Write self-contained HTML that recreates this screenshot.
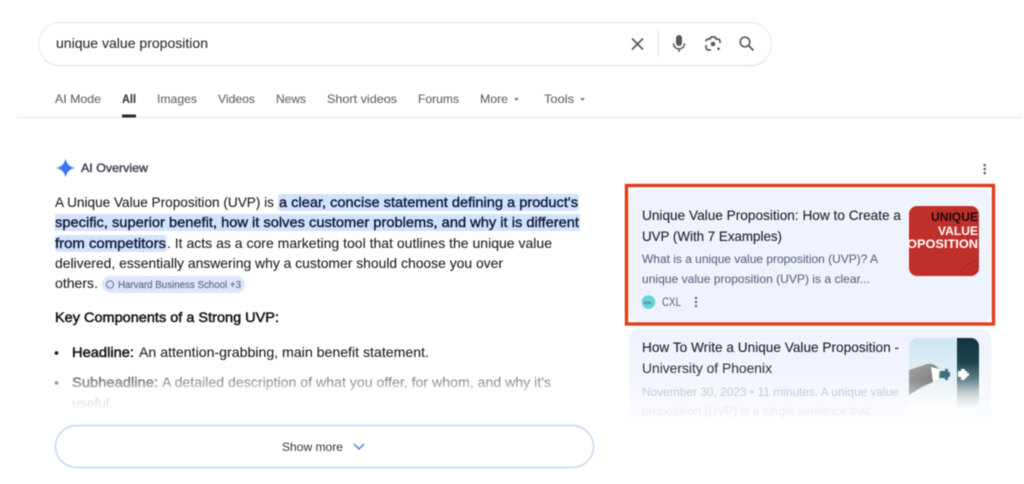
<!DOCTYPE html>
<html lang="en"><head><meta charset="utf-8"><title>unique value proposition</title>
<style>
html,body{margin:0;padding:0;background:#fff;width:1024px;height:484px;overflow:hidden}
svg{display:block;filter:blur(.5px)}
text{font-family:"Liberation Sans",sans-serif;white-space:pre}
.t{font-size:12px;fill:#62666b;stroke:#62666b;stroke-width:.12px}
.p{font-size:14px;fill:#1f2024;stroke:#1f2024;stroke-width:.1px}
.b{font-size:14px;fill:#0f1c38;stroke:#0f1c38;stroke-width:.38px}
.h{font-size:14px;fill:#1f2024;stroke:#1f2024;stroke-width:.1px}
.m{font-size:14px;fill:#131416;stroke:#131416;stroke-width:.5px}
.s{font-size:12px;fill:#5f6480;stroke:#5f6480;stroke-width:.08px}
</style></head><body>
<svg width="1024" height="484" viewBox="0 0 1024 484" xmlns="http://www.w3.org/2000/svg">
<defs>
<linearGradient id="fade" x1="0" y1="0" x2="0" y2="1"><stop offset="0" stop-color="#fff" stop-opacity="0"/><stop offset=".5" stop-color="#fff" stop-opacity=".65"/><stop offset="1" stop-color="#fff"/></linearGradient>
<linearGradient id="fade3" x1="0" y1="0" x2="0" y2="1"><stop offset="0" stop-color="#fff" stop-opacity="0"/><stop offset="1" stop-color="#fff" stop-opacity=".9"/></linearGradient>
<linearGradient id="card2" x1="0" y1="0" x2="0" y2="1"><stop offset="0" stop-color="#eff3fd"/><stop offset=".5" stop-color="#f3f6fd"/><stop offset="1" stop-color="#fff"/></linearGradient>
<linearGradient id="sky" x1="0" y1="0" x2="0" y2="1"><stop offset="0" stop-color="#cfe6f0"/><stop offset="1" stop-color="#f4f8fc"/></linearGradient>
<linearGradient id="dark" x1="0" y1="0" x2="0" y2="1"><stop offset="0" stop-color="#14333f"/><stop offset=".35" stop-color="#1f4350"/><stop offset="1" stop-color="#dfe6ec"/></linearGradient>
<linearGradient id="hand" x1="0" y1="0" x2="1" y2="1"><stop offset="0" stop-color="#a5a5a5"/><stop offset="1" stop-color="#6f6f6f"/></linearGradient>
<clipPath id="th1"><rect x="909" y="206" width="70" height="70" rx="8"/></clipPath>
<clipPath id="th2"><rect x="909" y="338" width="70" height="70" rx="8"/></clipPath>
</defs>

<!-- search box -->
<rect x="38.500" y="22.500" width="733" height="43" rx="21.500" fill="#fff" stroke="#e4e6ea" stroke-width="1"/>
<path d="M44 60q8 6 18 6H750q10 0 16-6" fill="none" stroke="#e3e5ea" stroke-width="1.200" opacity=".7"/>
<text x="56" y="48" font-size="14" fill="#2e2f32" stroke="#2e2f32" stroke-width=".1" textLength="152" lengthAdjust="spacingAndGlyphs">unique value proposition</text>
<path d="M632 38.500 643 49.500M643 38.500 632 49.500" stroke="#54575c" stroke-width="1.700" fill="none"/>
<rect x="658" y="30" width="1" height="27" fill="#e2e3e6"/>
<rect x="676" y="35" width="6" height="11" rx="3" fill="#55585d"/>
<path d="M673.500 43.500a5.500 5.500 0 0 0 11 0M679 49v3" fill="none" stroke="#55585d" stroke-width="1.500"/>
<path d="M706 41.500q0-2.500 2.500-2.500h1.500l1-2h4l1 2h1.500q2.500 0 2.500 2.500v1.500M706 45v2q0 3 3 3h2" fill="none" stroke="#55585d" stroke-width="1.700"/>
<circle cx="713" cy="44" r="2.300" fill="#55585d"/><circle cx="718.500" cy="48.700" r="1.300" fill="#55585d"/>
<circle cx="745" cy="42" r="4.800" fill="none" stroke="#55585d" stroke-width="1.600"/>
<path d="M748.500 45.500 753.500 50.500" stroke="#55585d" stroke-width="1.800"/>

<!-- tabs -->
<text class="t" x="55" y="103" textLength="46" lengthAdjust="spacingAndGlyphs">AI Mode</text>
<text x="122" y="103" font-size="12" font-weight="bold" fill="#2a2b2e" textLength="14" lengthAdjust="spacingAndGlyphs">All</text>
<text class="t" x="157" y="103" textLength="40" lengthAdjust="spacingAndGlyphs">Images</text>
<text class="t" x="218" y="103" textLength="37" lengthAdjust="spacingAndGlyphs">Videos</text>
<text class="t" x="276" y="103" textLength="30" lengthAdjust="spacingAndGlyphs">News</text>
<text class="t" x="327" y="103" textLength="70" lengthAdjust="spacingAndGlyphs">Short videos</text>
<text class="t" x="418" y="103" textLength="41" lengthAdjust="spacingAndGlyphs">Forums</text>
<text class="t" x="480" y="103" textLength="28" lengthAdjust="spacingAndGlyphs">More</text>
<path d="M514 98h5l-2.500 3z" fill="#7a7d82"/>
<text class="t" x="544" y="103" textLength="30" lengthAdjust="spacingAndGlyphs">Tools</text>
<path d="M580 98h5l-2.500 3z" fill="#7a7d82"/>
<rect x="17" y="117" width="1005" height="1" fill="#e2e3e6"/>
<rect x="122" y="114.500" width="14" height="3" fill="#2a2b2e"/>

<!-- AI overview -->
<path d="M65.500 158.500q1.500 8 9.500 9.500q-8 1.500-9.500 9.500q-1.500-8-9.500-9.500q8-1.500 9.500-9.500z" fill="#3b78ee"/>
<text x="81" y="172" font-size="12" fill="#33384a" stroke="#33384a" stroke-width=".35" textLength="67" lengthAdjust="spacingAndGlyphs">AI Overview</text>
<circle cx="984.700" cy="165" r="1.300" fill="#5f6368"/><circle cx="984.700" cy="169" r="1.300" fill="#5f6368"/><circle cx="984.700" cy="173" r="1.300" fill="#5f6368"/>

<!-- highlights -->
<rect x="278" y="194" width="301" height="17" rx="3" fill="#d3e3fd"/>
<rect x="55" y="214" width="525" height="17" fill="#d3e3fd"/>
<rect x="55" y="235" width="112" height="17" rx="3" fill="#d3e3fd"/>

<!-- paragraph -->
<text class="p" x="55" y="207" textLength="219" lengthAdjust="spacingAndGlyphs">A Unique Value Proposition (UVP) is</text>
<text class="b" x="279" y="207" textLength="299" lengthAdjust="spacingAndGlyphs">a clear, concise statement defining a product's</text>
<text class="b" x="55" y="227" textLength="524" lengthAdjust="spacingAndGlyphs">specific, superior benefit, how it solves customer problems, and why it is different</text>
<text class="b" x="55" y="248" textLength="111" lengthAdjust="spacingAndGlyphs">from competitors</text>
<text class="p" x="167" y="248" textLength="385" lengthAdjust="spacingAndGlyphs">. It acts as a core marketing tool that outlines the unique value</text>
<text class="p" x="55" y="268" textLength="448" lengthAdjust="spacingAndGlyphs">delivered, essentially answering why a customer should choose you over</text>
<text class="p" x="55" y="288" textLength="43" lengthAdjust="spacingAndGlyphs">others.</text>
<rect x="102" y="276" width="143" height="17" rx="8.500" fill="#dde7fb"/>
<circle cx="110" cy="284.500" r="3.600" fill="none" stroke="#7f8aa0" stroke-width="1.300"/>
<text x="118" y="288" font-size="10" fill="#5f6880" stroke="#5f6880" stroke-width=".15" textLength="123" lengthAdjust="spacingAndGlyphs">Harvard Business School +3</text>

<text class="m" x="55" y="322" textLength="224" lengthAdjust="spacingAndGlyphs">Key Components of a Strong UVP:</text>

<circle cx="56.500" cy="353" r="1.900" fill="#202124"/>
<text class="m" x="72" y="357" textLength="62" lengthAdjust="spacingAndGlyphs">Headline:</text>
<text class="h" x="139" y="357" textLength="290" lengthAdjust="spacingAndGlyphs">An attention-grabbing, main benefit statement.</text>
<circle cx="56.500" cy="383" r="1.900" fill="#202124"/>
<text class="m" x="72" y="387" textLength="86" lengthAdjust="spacingAndGlyphs">Subheadline:</text>
<text class="h" x="162" y="387" textLength="389" lengthAdjust="spacingAndGlyphs">A detailed description of what you offer, for whom, and why it's</text>
<text class="h" x="72" y="408" textLength="41" lengthAdjust="spacingAndGlyphs">useful.</text>
<rect x="40" y="362" width="570" height="50" fill="url(#fade)"/>

<!-- card 2 -->
<rect x="629" y="329" width="362" height="100" rx="9" fill="url(#card2)"/>
<text class="h" x="642" y="352" textLength="257" lengthAdjust="spacingAndGlyphs">How To Write a Unique Value Proposition -</text>
<text class="h" x="642" y="373" textLength="130" lengthAdjust="spacingAndGlyphs" opacity=".88">University of Phoenix</text>
<text class="s" x="642" y="396" textLength="257" lengthAdjust="spacingAndGlyphs" opacity=".28">November 30, 2023 • 11 minutes. A unique value</text>
<text class="s" x="642" y="415" textLength="238" lengthAdjust="spacingAndGlyphs" opacity=".09">proposition (UVP) is a single sentence that...</text>
<g clip-path="url(#th2)">
<rect x="909" y="338" width="48" height="70" fill="url(#sky)"/>
<rect x="957" y="338" width="22" height="70" fill="url(#dark)"/>
<path d="M909 370l18-6q5-1 9 2l3 3 1 9-5 3-13 6-13 8z" fill="url(#hand)"/>
<path d="M931 367l8 2v10l-6 3z" fill="#fff"/>
<path d="M940 371h5v-2h3v3h2v5h-2v3h-3v-2h-5z" fill="#3d6f7c"/>
<path d="M958 371h3v-2h4v2h2v2h2v3h-2v2h-2v2h-4v-3h-3z" fill="#fff"/>
</g>
<rect x="909" y="380" width="70" height="32" fill="url(#fade3)"/>

<!-- button -->
<rect x="55.500" y="425.500" width="538" height="42" rx="21" fill="#fff" stroke="#b3cdf8" stroke-width="1.200"/>
<text x="282" y="451" font-size="12" fill="#3d4655" stroke="#3d4655" stroke-width=".1" textLength="61" lengthAdjust="spacingAndGlyphs">Show more</text>
<path d="M354 444l5 5 5-5" fill="none" stroke="#4a78e0" stroke-width="1.400"/>

<!-- card 1 -->
<rect x="629" y="189" width="362" height="133" rx="9" fill="#eff3fd"/>
<text class="h" x="642" y="220" textLength="259" lengthAdjust="spacingAndGlyphs">Unique Value Proposition: How to Create a</text>
<text class="h" x="642" y="241" textLength="140" lengthAdjust="spacingAndGlyphs">UVP (With 7 Examples)</text>
<text class="s" x="642" y="263" textLength="236" lengthAdjust="spacingAndGlyphs">What is a unique value proposition (UVP)? A</text>
<text class="s" x="642" y="283" textLength="228" lengthAdjust="spacingAndGlyphs">unique value proposition (UVP) is a clear...</text>
<circle cx="648.500" cy="302" r="6.800" fill="#62d5d9"/>
<text x="644" y="304" font-size="4" font-weight="bold" fill="#b0283a">CXL</text>
<text x="662" y="306" font-size="12" fill="#575e72" textLength="19" lengthAdjust="spacingAndGlyphs">CXL</text>
<circle cx="696" cy="298" r="1.200" fill="#5f6368"/><circle cx="696" cy="302" r="1.200" fill="#5f6368"/><circle cx="696" cy="306" r="1.200" fill="#5f6368"/>
<g clip-path="url(#th1)">
<rect x="909" y="206" width="70" height="70" fill="#c0302a"/>
<text x="931" y="221" font-size="12" font-weight="bold" fill="#17090a" textLength="47" lengthAdjust="spacingAndGlyphs">UNIQUE</text>
<text x="938" y="235" font-size="12" font-weight="bold" fill="#fff" textLength="40" lengthAdjust="spacingAndGlyphs">VALUE</text>
<text x="907" y="248" font-size="12" font-weight="bold" fill="#fff" textLength="71" lengthAdjust="spacingAndGlyphs">OPOSITION</text>
<g fill="none" stroke="#a82822" stroke-width="1"><circle cx="979" cy="281" r="10"/><circle cx="979" cy="281" r="15"/><circle cx="979" cy="281" r="20"/></g>
</g>
<!-- red frame -->
<rect x="626.500" y="185.500" width="367" height="138.500" fill="none" stroke="#e13d1d" stroke-width="3.400"/>
</svg>
</body></html>
